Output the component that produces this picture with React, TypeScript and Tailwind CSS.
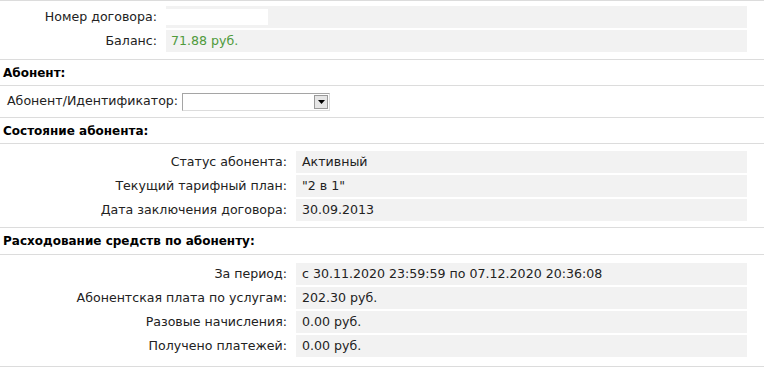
import React from 'react';

interface Row {
  label: string;
  value: React.ReactNode;
}

const font = { fontFamily: '"DejaVu Sans", Verdana, sans-serif' };

const InfoRows: React.FC<{ rows: Row[]; labelWidth: string }> = ({ rows, labelWidth }) => (
  <div className="flex flex-col gap-[2px]">
    {rows.map((row, i) => (
      <div key={i} className="flex h-[22px] items-stretch">
        <div className={`${labelWidth} shrink-0 text-right text-[#222] leading-[22px] pr-[9px]`}>{row.label}</div>
        <div className="w-[451px] bg-[#f2f2f2] pl-[6px] leading-[22px] text-[#222]">{row.value}</div>
      </div>
    ))}
  </div>
);

const SectionHeader: React.FC<{ title: string; h: string }> = ({ title, h }) => (
  <div className={`${h} flex items-center pl-[3px] text-[12px] font-bold text-black border-b border-[#dcdcdc]`}>
    {title}
  </div>
);

export default function App() {
  return (
    <div className="w-[764px] h-[371px] bg-white text-[12.6px] overflow-hidden" style={font}>
      <div className="border-t border-[#dcdcdc]" />

      {/* Contract */}
      <div className="pt-[5px] pb-[7px] border-b border-[#dcdcdc]">
        <div className="flex flex-col gap-[2px]">
          <div className="flex h-[22px]">
            <div className="w-[166px] shrink-0 text-right pr-[9px] leading-[22px] text-[#222]">Номер договора:</div>
            <div className="w-[581px] bg-[#f2f2f2] flex items-center">
              <div className="w-[102px] h-[16px] bg-white" />
            </div>
          </div>
          <div className="flex h-[22px]">
            <div className="w-[166px] shrink-0 text-right pr-[9px] leading-[22px] text-[#222]">Баланс:</div>
            <div className="w-[581px] bg-[#f2f2f2] pl-[5px] leading-[22px] text-[#4f9a3c]">71.88 руб.</div>
          </div>
        </div>
      </div>

      <SectionHeader title="Абонент:" h="h-[26px]" />

      <div className="h-[32px] flex items-center pl-[7px] border-b border-[#dcdcdc]">
        <span className="text-[#222]">Абонент/Идентификатор:</span>
        <div className="ml-[4px] w-[148px] h-[18px] border border-[#a5a5a5] border-b-[#dcdcdc] border-r-[#dcdcdc] bg-white flex justify-end items-center pr-[1px]">
          <div className="w-[14px] h-[14px] bg-[#e6e6e6] border border-[#9a9a9a] flex items-center justify-center">
            <svg width="7" height="4" viewBox="0 0 7 4">
              <path d="M0 0h7L3.5 4z" fill="#000" />
            </svg>
          </div>
        </div>
      </div>

      <SectionHeader title="Состояние абонента:" h="h-[26px]" />

      <div className="pt-[7px] pb-[6px] border-b border-[#dcdcdc]">
        <InfoRows
          labelWidth="w-[296px]"
          rows={[
            { label: 'Статус абонента:', value: 'Активный' },
            { label: 'Текущий тарифный план:', value: '"2 в 1"' },
            { label: 'Дата заключения договора:', value: '30.09.2013' },
          ]}
        />
      </div>

      <SectionHeader title="Расходование средств по абоненту:" h="h-[27px]" />

      <div className="pt-[8px] pb-[9px] border-b border-[#dcdcdc]">
        <InfoRows
          labelWidth="w-[296px]"
          rows={[
            { label: 'За период:', value: 'с 30.11.2020 23:59:59 по 07.12.2020 20:36:08' },
            { label: 'Абонентская плата по услугам:', value: '202.30 руб.' },
            { label: 'Разовые начисления:', value: '0.00 руб.' },
            { label: 'Получено платежей:', value: '0.00 руб.' },
          ]}
        />
      </div>
    </div>
  );
}
